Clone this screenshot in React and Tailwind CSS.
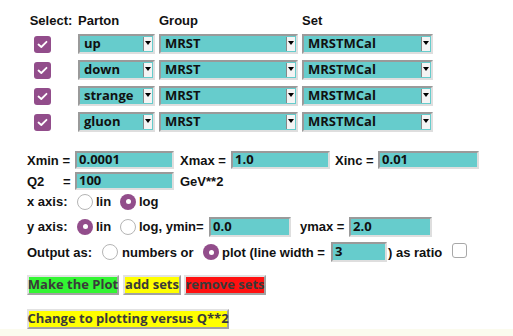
import React from 'react';

const lab = "font-['Liberation_Sans',Arial,sans-serif] font-bold text-[13px] text-[#111] leading-[15px] whitespace-nowrap";
const fld = "font-['Open_Sans',sans-serif] font-bold text-[13px] text-[#111] whitespace-nowrap";

function Sel({ value, w }) {
  return (
    <div className={`flex h-[20px] items-stretch bg-[#66cccc] border-2 border-t-[#9a9a9a] border-l-[#9a9a9a] border-b-[#dedede] border-r-[#dedede] ${w}`}>
      <div className={`flex-1 flex items-center pl-[4px] ${fld}`}>{value}</div>
      <div className="w-[9px] my-[1px] mr-[1px] bg-[#f4f4f4] border-l border-[#888] flex justify-center pt-[4px]">
        <div className="w-0 h-0 border-l-[3px] border-r-[3px] border-t-[4px] border-l-transparent border-r-transparent border-t-black" />
      </div>
    </div>
  );
}

function Inp({ value, w, h = 'h-[18px]' }) {
  return (
    <div className={`flex items-center pl-[2px] bg-[#66cccc] border-2 border-t-[#9a9a9a] border-l-[#9a9a9a] border-b-[#dedede] border-r-[#dedede] ${h} ${w} ${fld}`}>
      {value}
    </div>
  );
}

function Check() {
  return (
    <div className="w-[17px] h-[17px] rounded-[3px] bg-[#924d8b] flex items-center justify-center">
      <svg width="11" height="9" viewBox="0 0 11 9">
        <path d="M1.5 4.5 L4.3 7 L9.5 1.8" fill="none" stroke="white" strokeWidth="1.8" strokeLinecap="round" strokeLinejoin="round" />
      </svg>
    </div>
  );
}

function Radio({ on }) {
  return on ? (
    <div className="w-[16px] h-[16px] rounded-full bg-[#924d8b] flex items-center justify-center shrink-0">
      <div className="w-[5px] h-[5px] rounded-full bg-white" />
    </div>
  ) : (
    <div className="w-[16px] h-[16px] rounded-full bg-white border border-[#b5b5b5] shrink-0" />
  );
}

function Btn({ children, bg, w }) {
  return (
    <div className={`h-[20px] flex items-center justify-center border-2 border-t-[#e2e2e2] border-l-[#e2e2e2] border-b-[#a2a2a2] border-r-[#a2a2a2] ${bg} ${w} font-['Open_Sans',sans-serif] font-bold text-[13px] text-[#3a3a3a] whitespace-nowrap`}>
      {children}
    </div>
  );
}

const partons = ['up', 'down', 'strange', 'gluon'];

export default function App() {
  return (
    <div className="w-[513px] h-[336px] bg-[#fbfbee] overflow-hidden">
      <div className="h-[329px] bg-white pl-[27px] pt-[13px]">
        <div className="flex h-[15px]">
          <div className={`w-[48px] text-center ${lab}`}>Select:</div>
          <div className={`ml-[3px] w-[81px] ${lab}`}>Parton</div>
          <div className={`w-[143px] ${lab}`}>Group</div>
          <div className={lab}>Set</div>
        </div>
        <div className="mt-[6px] flex flex-col gap-[6px]">
          {partons.map(p => (
            <div key={p} className="flex items-center h-[20px]">
              <div className="w-[48px] pl-[7px]"><Check /></div>
              <div className="ml-[3px]"><Sel value={p} w="w-[77px]" /></div>
              <div className="ml-[4px]"><Sel value="MRST" w="w-[139px]" /></div>
              <div className="ml-[4px]"><Sel value="MRSTMCal" w="w-[131px]" /></div>
            </div>
          ))}
        </div>

        <div className="mt-[19px] flex items-center h-[18px]">
          <div className={`w-[48px] ${lab}`}>Xmin =</div>
          <Inp value="0.0001" w="w-[99px]" />
          <div className={`ml-[6px] w-[51px] ${lab}`}>Xmax =</div>
          <Inp value="1.0" w="w-[99px]" />
          <div className={`ml-[5px] w-[43px] ${lab}`}>Xinc =</div>
          <Inp value="0.01" w="w-[101px]" />
        </div>
        <div className="mt-[3px] flex items-center h-[18px]">
          <div className={`w-[36px] ${lab}`}>Q2</div>
          <div className={`w-[12px] ${lab}`}>=</div>
          <Inp value="100" w="w-[99px]" />
          <div className={`ml-[6px] ${lab}`}>GeV**2</div>
        </div>

        <div className="mt-[3px] flex items-center h-[17px]">
          <div className={`w-[50px] ${lab}`}>x axis:</div>
          <Radio />
          <div className={`ml-[3px] w-[24px] ${lab}`}>lin</div>
          <Radio on />
          <div className={`ml-[3px] ${lab}`}>log</div>
        </div>
        <div className="mt-[7px] flex items-center h-[19px]">
          <div className={`w-[50px] ${lab}`}>y axis:</div>
          <Radio on />
          <div className={`ml-[3px] w-[24px] ${lab}`}>lin</div>
          <Radio />
          <div className={`ml-[3px] w-[70px] ${lab}`}>log, ymin=</div>
          <Inp value="0.0" w="w-[82px]" h="h-[20px]" />
          <div className={`ml-[9px] w-[49px] ${lab}`}>ymax =</div>
          <Inp value="2.0" w="w-[83px]" h="h-[20px]" />
        </div>
        <div className="mt-[6px] flex items-center h-[20px]">
          <div className={`w-[75px] ${lab}`}>Output as:</div>
          <Radio />
          <div className={`ml-[4px] w-[81px] ${lab}`}>numbers or</div>
          <Radio on />
          <div className={`ml-[3px] w-[109px] ${lab}`}>plot (line width =</div>
          <Inp value="3" w="w-[56px]" h="h-[20px]" />
          <div className={`ml-[1px] w-[64px] ${lab}`}>) as ratio</div>
          <div className="w-[15px] h-[15px] rounded-[3px] bg-white border border-[#a8a8a8] -mt-[4px]" />
        </div>

        <div className="mt-[13px] flex h-[20px]">
          <Btn bg="bg-[#33f533]" w="w-[92px]">Make the Plot</Btn>
          <div className="ml-[4px]"><Btn bg="bg-[#ffff00]" w="w-[58px]">add sets</Btn></div>
          <div className="ml-[3px]"><Btn bg="bg-[#ff1010]" w="w-[82px]">remove sets</Btn></div>
        </div>
        <div className="mt-[14px] flex h-[20px]">
          <Btn bg="bg-[#ffff00]" w="w-[202px]">Change to plotting versus Q**2</Btn>
        </div>
      </div>
    </div>
  );
}
